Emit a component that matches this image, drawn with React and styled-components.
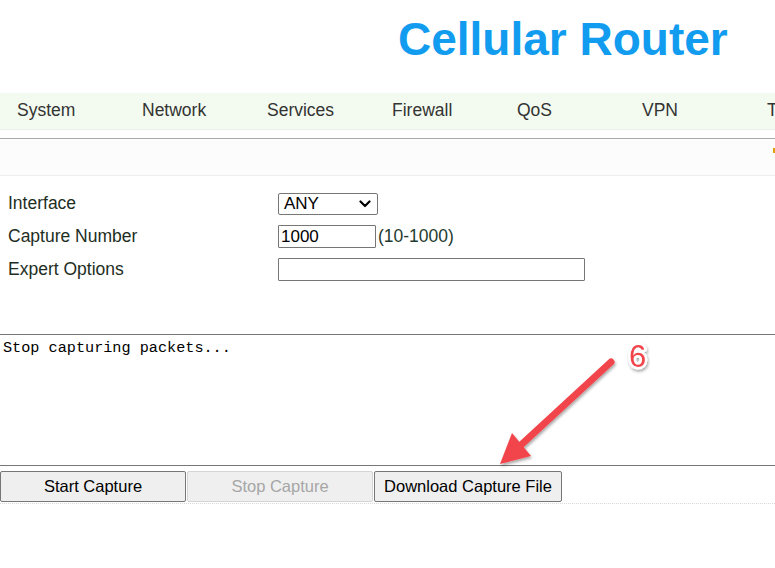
import React from "react";
import styled, { createGlobalStyle } from "styled-components";

const Global = createGlobalStyle`
  html, body { margin: 0; padding: 0; background: #fff; }
  body { font-family: "Liberation Sans", Arial, sans-serif; }
`;

const Page = styled.div`
  position: relative;
  width: 775px;
  height: 568px;
  overflow: hidden;
  background: #fff;
`;

const Header = styled.header`
  height: 93px;
  padding-left: 398px;
  box-sizing: border-box;
  display: flex;
  align-items: flex-start;
`;

const Title = styled.h1`
  margin: 12px 0 0;
  font-size: 46px;
  font-weight: bold;
  line-height: 54px;
  color: #129cef;
  white-space: nowrap;
`;

const Nav = styled.nav`
  display: flex;
  height: 36px;
  background: #f3fbf0;
  border-bottom: 1px solid #ecefea;
  white-space: nowrap;
`;

const NavItem = styled.div`
  flex: 0 0 125px;
  box-sizing: border-box;
  padding-left: 17px;
  font-size: 17.5px;
  line-height: 34px;
  color: #333;
`;

const SubBar = styled.div`
  position: relative;
  margin-top: 8px;
  height: 36px;
  background: #fcfcfc;
  border-top: 1px solid #aaa;
  border-bottom: 1px solid #eee;
`;

const Mark = styled.span`
  position: absolute;
  right: 0;
  top: 9px;
  width: 2px;
  height: 5px;
  background: #e0a000;
`;

const Form = styled.div`
  padding: 11px 0 0 8px;
`;

const Row = styled.div`
  display: grid;
  grid-template-columns: 270px auto;
  align-items: center;
  height: 33px;
`;

const Label = styled.div`
  font-size: 17.5px;
  color: #1e2e1e;
`;

const Field = styled.div`
  display: flex;
  align-items: center;
`;

const Select = styled.div`
  box-sizing: border-box;
  width: 100px;
  height: 22px;
  border: 1px solid #767676;
  border-radius: 2px;
  display: flex;
  align-items: center;
  justify-content: space-between;
  padding: 0 6px 0 5px;
  font-size: 17px;
  color: #000;
  background: #fff;
`;

const Input = styled.div`
  box-sizing: border-box;
  width: ${(p) => p.w}px;
  height: 23px;
  border: 1px solid #767676;
  border-radius: 1px;
  padding-left: 2px;
  font-size: 17px;
  line-height: 21px;
  color: #000;
  background: #fff;
`;

const Hint = styled.span`
  margin-left: 2px;
  font-size: 17.5px;
  color: #1f3b2f;
`;

const Log = styled.div`
  margin-top: 48px;
  height: 132px;
  border-top: 1px solid #777;
  border-bottom: 1px solid #777;
  padding: 4px 3px;
  box-sizing: border-box;
  font-family: "Liberation Mono", "DejaVu Sans Mono", monospace;
  font-size: 15.2px;
  line-height: 18px;
  color: #000;
`;

const Buttons = styled.div`
  display: flex;
  gap: 1px;
  margin-top: 5px;
  padding-bottom: 1px;
  border-bottom: 1px dotted #d8d8d8;
`;

const Button = styled.div`
  box-sizing: border-box;
  width: ${(p) => p.w}px;
  height: 31px;
  display: flex;
  align-items: center;
  justify-content: center;
  background: #efefef;
  border: 1px solid ${(p) => (p.disabled ? "#d4d4d4" : "#767676")};
  border-radius: 2px;
  font-size: 16.5px;
  color: ${(p) => (p.disabled ? "#a6a6a6" : "#000")};
  white-space: nowrap;
`;

const Overlay = styled.svg`
  position: absolute;
  left: 0;
  top: 0;
  pointer-events: none;
`;

const Chevron = () => (
  <svg width="12" height="8" viewBox="0 0 12 8">
    <path d="M1.5 1.5 L6 6 L10.5 1.5" fill="none" stroke="#000" strokeWidth="2.2" strokeLinecap="round" strokeLinejoin="round" />
  </svg>
);

export default function App() {
  const nav = ["System", "Network", "Services", "Firewall", "QoS", "VPN", "Tools"];
  return (
    <Page>
      <Global />
      <Header>
        <Title>Cellular Router</Title>
      </Header>
      <Nav>
        {nav.map((n) => (
          <NavItem key={n}>{n}</NavItem>
        ))}
      </Nav>
      <SubBar>
        <Mark />
      </SubBar>
      <Form>
        <Row>
          <Label>Interface</Label>
          <Field>
            <Select>
              <span>ANY</span>
              <Chevron />
            </Select>
          </Field>
        </Row>
        <Row>
          <Label>Capture Number</Label>
          <Field>
            <Input w={98}>1000</Input>
            <Hint>(10-1000)</Hint>
          </Field>
        </Row>
        <Row>
          <Label>Expert Options</Label>
          <Field>
            <Input w={307} />
          </Field>
        </Row>
      </Form>
      <Log>Stop capturing packets...</Log>
      <Buttons>
        <Button w={186}>Start Capture</Button>
        <Button w={186} disabled>Stop Capture</Button>
        <Button w={188}>Download Capture File</Button>
      </Buttons>
      <Overlay width="775" height="568" viewBox="0 0 775 568">
        <defs>
          <filter id="sh" x="-20%" y="-20%" width="140%" height="140%">
            <feDropShadow dx="1" dy="2" stdDeviation="1.5" floodColor="#000" floodOpacity="0.35" />
          </filter>
        </defs>
        <g filter="url(#sh)">
          <line x1="611" y1="362" x2="522" y2="444" stroke="#f2454b" strokeWidth="7" strokeLinecap="round" />
          <polygon points="500,464 512,433 531,456" fill="#f2454b" />
        </g>
        <text
          x="629"
          y="367"
          fontFamily="'Liberation Sans', Arial, sans-serif"
          fontSize="31"
          fill="#f2454b"
          stroke="#fff"
          strokeWidth="5"
          paintOrder="stroke"
          strokeLinejoin="round"
          filter="url(#sh)"
        >
          6
        </text>
      </Overlay>
    </Page>
  );
}
